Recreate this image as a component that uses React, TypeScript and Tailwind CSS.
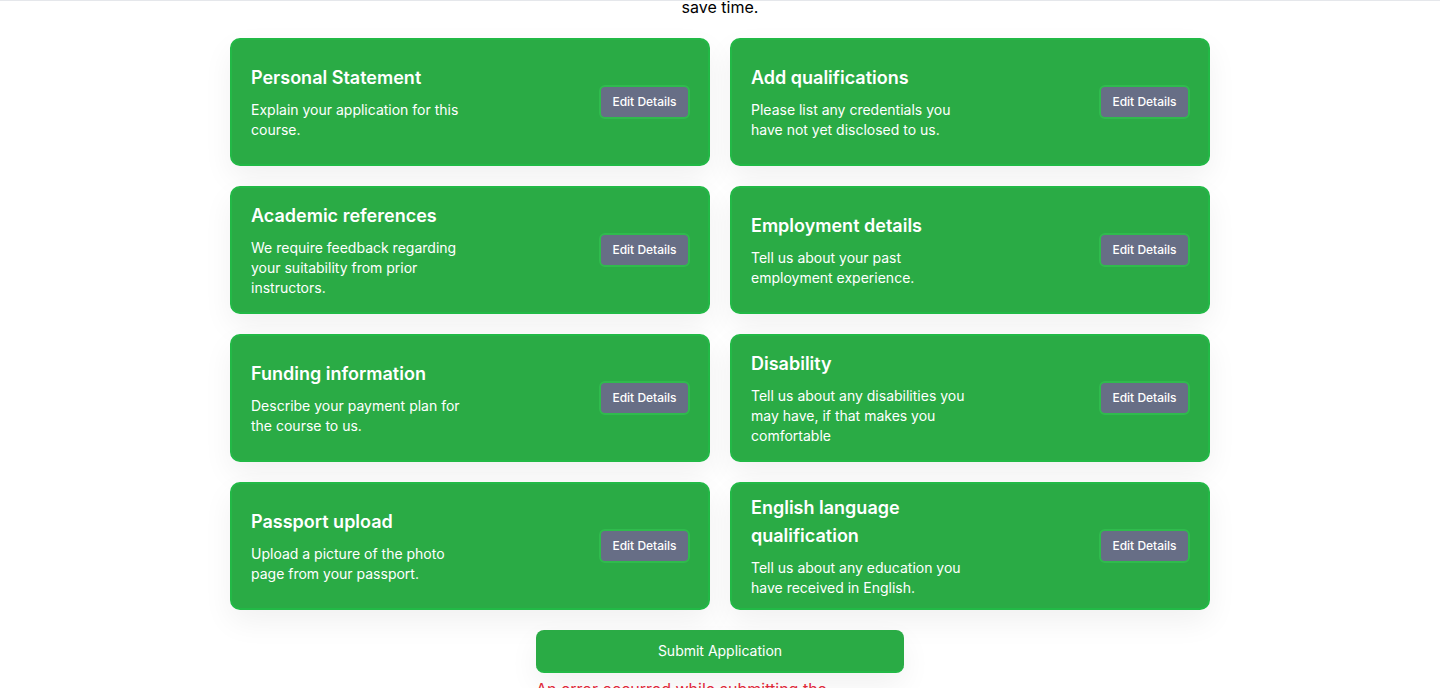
import React from "react";

const cards = [
  { title: "Personal Statement", desc: "Explain your application for this course." },
  { title: "Add qualifications", desc: "Please list any credentials you have not yet disclosed to us." },
  { title: "Academic references", desc: "We require feedback regarding your suitability from prior instructors." },
  { title: "Employment details", desc: "Tell us about your past employment experience." },
  { title: "Funding information", desc: "Describe your payment plan for the course to us." },
  { title: "Disability", desc: "Tell us about any disabilities you may have, if that makes you comfortable" },
  { title: "Passport upload", desc: "Upload a picture of the photo page from your passport." },
  { title: "English language qualification", desc: "Tell us about any education you have received in English." },
];

export default function App() {
  return (
    <div
      className="min-h-[688px] bg-white border-t border-gray-200 overflow-hidden"
      style={{ fontFamily: "Inter, 'Noto Sans', sans-serif" }}
    >
      <p className="text-center text-base leading-6 text-black -mt-[6px]">save time.</p>
      <div className="w-[980px] mx-auto mt-[19px]">
        <div className="grid grid-cols-2 gap-x-5 gap-y-5">
          {cards.map((c) => (
            <div
              key={c.title}
              className="h-32 rounded-[10px] bg-[#2aab45] border-2 border-[#22b946] shadow-[0_12px_30px_rgba(0,0,0,0.06)] pl-[19px] pr-[18px] flex items-center justify-between"
            >
              <div className="w-[220px] text-white">
                <h3 className="text-lg leading-7 font-semibold">{c.title}</h3>
                <p className="mt-2 text-sm leading-5">{c.desc}</p>
              </div>
              <button className="h-[34px] w-[91px] rounded-md bg-[#676e86] border-2 border-[#2fbb4d] text-white text-xs leading-4 font-medium">
                Edit Details
              </button>
            </div>
          ))}
        </div>
        <div className="w-[368px] mx-auto mt-5">
          <button className="w-full h-[43px] rounded-lg bg-[#2aab45] border-b-2 border-[#22b946] text-white text-sm shadow-[0_12px_30px_rgba(0,0,0,0.06)]">
            Submit Application
          </button>
          <p className="mt-1 text-base leading-6 text-[#e0283a]">
            An error occurred while submitting the application.
          </p>
        </div>
      </div>
    </div>
  );
}
